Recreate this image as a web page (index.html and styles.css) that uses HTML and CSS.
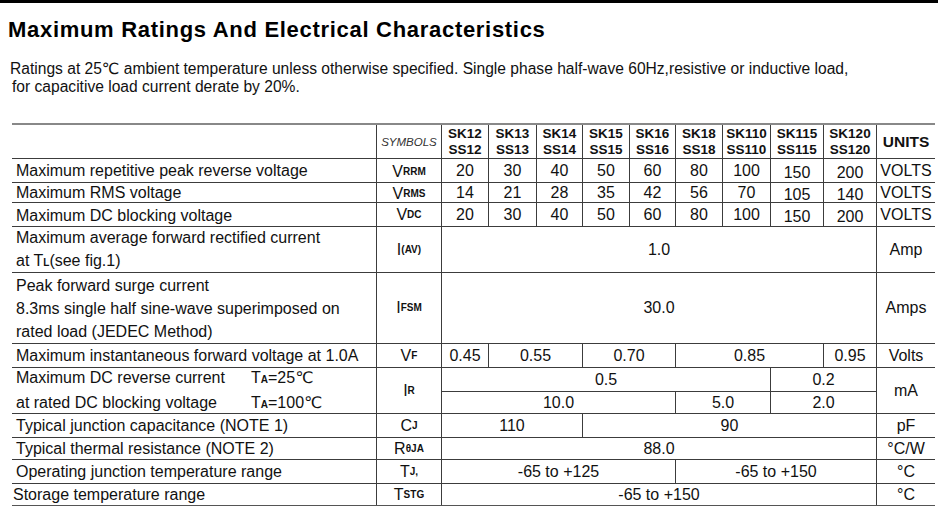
FILE: index.html
```html
<!DOCTYPE html>
<html>
<head>
<meta charset="utf-8">
<title>Maximum Ratings And Electrical Characteristics</title>
<link rel="stylesheet" href="styles.css">
</head>
<body>
<div class="topbar"></div>
<h1 class="title">Maximum Ratings And Electrical Characteristics</h1>
<p class="intro"><span class="line">Ratings at 25℃ ambient temperature unless otherwise specified. <span class="single">Single phase half-wave 60Hz,resistive or inductive load,</span></span><span class="line second">for capacitive load current derate by 20%.</span></p>

<div class="grid">
  <!-- header -->
  <div class="c d"></div>
  <div class="c sym symhead">SYMBOLS</div>
  <div class="c hd"><span>SK12</span><span>SS12</span></div>
  <div class="c hd"><span>SK13</span><span>SS13</span></div>
  <div class="c hd"><span>SK14</span><span>SS14</span></div>
  <div class="c hd"><span>SK15</span><span>SS15</span></div>
  <div class="c hd"><span>SK16</span><span>SS16</span></div>
  <div class="c hd"><span>SK18</span><span>SS18</span></div>
  <div class="c hd"><span>SK110</span><span>SS110</span></div>
  <div class="c hd"><span>SK115</span><span>SS115</span></div>
  <div class="c hd"><span>SK120</span><span>SS120</span></div>
  <div class="c units">UNITS</div>

  <!-- VRRM -->
  <div class="c d">Maximum repetitive peak reverse voltage</div>
  <div class="c sym lo2">V<span class="sub">RRM</span></div>
  <div class="c">20</div><div class="c">30</div><div class="c">40</div><div class="c">50</div><div class="c">60</div>
  <div class="c">80</div><div class="c">100</div><div class="c lo">150</div><div class="c lo">200</div>
  <div class="c u">VOLTS</div>

  <!-- VRMS -->
  <div class="c d">Maximum RMS voltage</div>
  <div class="c sym lo2">V<span class="sub">RMS</span></div>
  <div class="c">14</div><div class="c">21</div><div class="c">28</div><div class="c">35</div><div class="c">42</div>
  <div class="c">56</div><div class="c">70</div><div class="c lo">105</div><div class="c lo">140</div>
  <div class="c u">VOLTS</div>

  <!-- VDC -->
  <div class="c d dlow">Maximum DC blocking voltage</div>
  <div class="c sym">V<span class="sub">DC</span></div>
  <div class="c">20</div><div class="c">30</div><div class="c">40</div><div class="c">50</div><div class="c">60</div>
  <div class="c">80</div><div class="c">100</div><div class="c lo">150</div><div class="c lo">200</div>
  <div class="c u">VOLTS</div>

  <!-- I(AV) -->
  <div class="c d"><span>Maximum average forward rectified current</span><span>at T<span class="sub">L</span>(see fig.1)</span></div>
  <div class="c sym">I<span class="sub">(AV)</span></div>
  <div class="c s9">1.0</div>
  <div class="c u">Amp</div>

  <!-- IFSM -->
  <div class="c d"><span>Peak forward surge current</span><span>8.3ms single half sine-wave superimposed on</span><span>rated load (JEDEC Method)</span></div>
  <div class="c sym">I<span class="sub">FSM</span></div>
  <div class="c s9">30.0</div>
  <div class="c u">Amps</div>

  <!-- VF -->
  <div class="c d">Maximum instantaneous forward voltage at 1.0A</div>
  <div class="c sym">V<span class="sub">F</span></div>
  <div class="c">0.45</div>
  <div class="c s2">0.55</div>
  <div class="c s2">0.70</div>
  <div class="c s3">0.85</div>
  <div class="c">0.95</div>
  <div class="c u">Volts</div>

  <!-- IR -->
  <div class="c d r2"><span class="ir"><span class="ir-a">Maximum DC reverse current</span><span>T<span class="sub">A</span>=25℃</span></span><span class="ir"><span class="ir-a">at rated DC blocking voltage</span><span>T<span class="sub">A</span>=100℃</span></span></div>
  <div class="c sym r2">I<span class="sub">R</span></div>
  <div class="c s7">0.5</div>
  <div class="c s2">0.2</div>
  <div class="c u r2">mA</div>
  <div class="c s5">10.0</div>
  <div class="c s2">5.0</div>
  <div class="c s2">2.0</div>

  <!-- CJ -->
  <div class="c d">Typical junction capacitance (NOTE 1)</div>
  <div class="c sym">C<span class="sub">J</span></div>
  <div class="c s3">110</div>
  <div class="c s6">90</div>
  <div class="c u">pF</div>

  <!-- RthetaJA -->
  <div class="c d">Typical thermal resistance (NOTE 2)</div>
  <div class="c sym">R<span class="sub">θJA</span></div>
  <div class="c s9">88.0</div>
  <div class="c u">°C/W</div>

  <!-- TJ -->
  <div class="c d">Operating junction temperature range</div>
  <div class="c sym">T<span class="sub">J,</span></div>
  <div class="c s5">-65 to +125</div>
  <div class="c s4">-65 to +150</div>
  <div class="c u">°C</div>

  <!-- TSTG -->
  <div class="c d dl">Storage temperature range</div>
  <div class="c sym">T<span class="sub">STG</span></div>
  <div class="c s9">-65 to +150</div>
  <div class="c u">°C</div>
</div>
</body>
</html>
```

FILE: styles.css
```css
html, body {
  margin: 0;
  padding: 0;
  background: #fff;
}

body {
  font-family: "Liberation Sans", Arial, "DejaVu Sans", sans-serif;
  color: #111;
  width: 952px;
  height: 517px;
  overflow: hidden;
}

.topbar {
  width: 938px;
  height: 3px;
  background: #000;
}

.title {
  margin: 14px 0 0 8px;
  font-size: 22px;
  line-height: 26px;
  font-weight: bold;
  letter-spacing: 0.7px;
  color: #000;
  white-space: nowrap;
}

.intro {
  margin: 17px 0 0 10px;
  font-size: 15.6px;
  line-height: 18px;
  white-space: nowrap;
}

.intro .line {
  display: block;
}

.intro .second {
  padding-left: 2px;
}

.grid {
  margin: 27px 0 0 12px;
  width: 923px;
  display: grid;
  grid-template-columns: 364px 64px 46px 47px 45px 46px 45px 46px 47px 52px 52px 58px;
  grid-template-rows: 33px 23px 19px 23px 45px 70px 23px 23px 21px 23px 21px 23px 21px;
  gap: 1px;
  background: #3c3c3c;
  border-top: 2px solid #888;
  border-bottom: 1px solid #555;
  font-size: 16px;
  color: #111;
}

.c {
  background: #fff;
  display: flex;
  align-items: center;
  justify-content: center;
  white-space: nowrap;
  line-height: 18px;
}

.d {
  flex-direction: column;
  align-items: flex-start;
  justify-content: center;
  padding-left: 4px;
  line-height: 23px;
}

.dlow {
  padding-top: 2px;
}

.dl {
  padding-left: 1px;
}

.r2 {
  grid-row: span 2;
}

.ir {
  display: flex;
}

.ir-a {
  width: 235px;
}

.sym {
  font-size: 16px;
}

.symhead {
  font-size: 11.5px;
  font-style: italic;
  color: #333;
}

.sub {
  font-size: 10px;
  font-weight: bold;
}

.hd {
  flex-direction: column;
  font-size: 13.5px;
  font-weight: bold;
  line-height: 16px;
}

.units {
  font-size: 15.5px;
  font-weight: bold;
}

.lo {
  padding-top: 5px;
}

.lo2 {
  padding-top: 3px;
}

.s2 { grid-column: span 2; }
.s3 { grid-column: span 3; }
.s4 { grid-column: span 4; }
.s5 { grid-column: span 5; }
.s6 { grid-column: span 6; }
.s7 { grid-column: span 7; }
.s9 { grid-column: span 9; }
```
